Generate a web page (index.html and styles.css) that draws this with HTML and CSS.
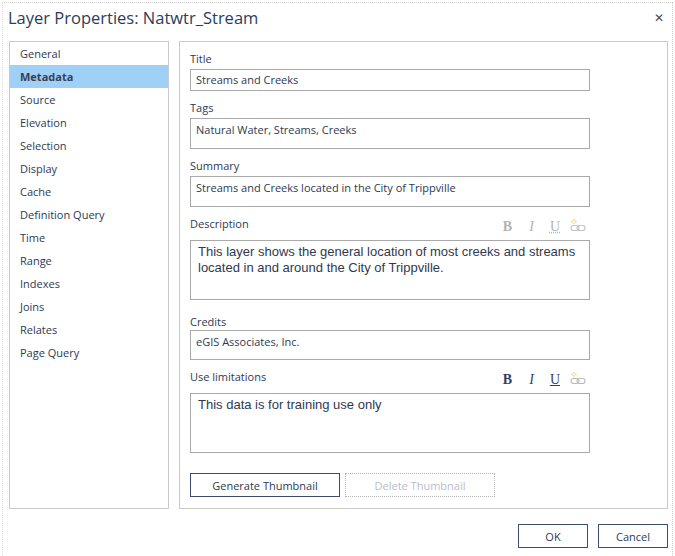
FILE: index.html
```html
<!DOCTYPE html>
<html>
<head>
<meta charset="utf-8">
<link rel="stylesheet" href="styles.css">
</head>
<body>
<div class="frame">
  <div class="titlebar">
    <span class="title">Layer Properties: Natwtr_Stream</span>
    <span class="close">&#x2715;</span>
  </div>
  <div class="main">
    <ul class="nav">
      <li>General</li>
      <li class="selected">Metadata</li>
      <li>Source</li>
      <li>Elevation</li>
      <li>Selection</li>
      <li>Display</li>
      <li>Cache</li>
      <li>Definition Query</li>
      <li>Time</li>
      <li>Range</li>
      <li>Indexes</li>
      <li>Joins</li>
      <li>Relates</li>
      <li>Page Query</li>
    </ul>
    <div class="content">
      <div class="label">Title</div>
      <div class="input single">Streams and Creeks</div>

      <div class="label gap">Tags</div>
      <div class="input double">Natural Water, Streams, Creeks</div>

      <div class="label gap">Summary</div>
      <div class="input double">Streams and Creeks located in the City of Trippville</div>

      <div class="labelrow gap">
        <span class="label">Description</span>
        <span class="tools disabled">
          <span class="tb b">B</span>
          <span class="tb i">I</span>
          <span class="tb u">U</span>
          <svg class="link" width="16" height="14" viewBox="0 0 16 14"><g stroke="#e9dc8a" stroke-width="1" fill="none"><circle cx="4" cy="3.5" r="1.6"/><path d="M4 0.5v1M4 5.5v1M1 3.5h1M6 3.5h1"/></g><g stroke="#c4c4c4" stroke-width="1.2" fill="none"><rect x="1" y="7.5" width="8" height="5" rx="2.5"/><rect x="7" y="7.5" width="8" height="5" rx="2.5"/></g></svg>
        </span>
      </div>
      <div class="input area">This layer shows the general location of most creeks and streams located in and around the City of Trippville.</div>

      <div class="label credits">Credits</div>
      <div class="input credit">eGIS Associates, Inc.</div>

      <div class="labelrow gap">
        <span class="label">Use limitations</span>
        <span class="tools">
          <span class="tb b">B</span>
          <span class="tb i">I</span>
          <span class="tb u">U</span>
          <svg class="link" width="16" height="14" viewBox="0 0 16 14"><g stroke="#f0e08a" stroke-width="1" fill="none"><circle cx="4" cy="3.5" r="1.6"/><path d="M4 0.5v1M4 5.5v1M1 3.5h1M6 3.5h1"/></g><g stroke="#bdbdbd" stroke-width="1.2" fill="none"><rect x="1" y="7.5" width="8" height="5" rx="2.5"/><rect x="7" y="7.5" width="8" height="5" rx="2.5"/></g></svg>
        </span>
      </div>
      <div class="input area">This data is for training use only</div>

      <div class="thumbs">
        <button class="btn">Generate Thumbnail</button>
        <button class="btn off">Delete Thumbnail</button>
      </div>
    </div>
  </div>
  <div class="footer">
    <button class="btn small">OK</button>
    <button class="btn small">Cancel</button>
  </div>
</div>
</body>
</html>
```

FILE: styles.css
```css
html, body {
  margin: 0;
  padding: 0;
  background: #ffffff;
}

body {
  font-family: "Open Sans", "Noto Sans", sans-serif;
  font-size: 11px;
  color: #2e3a52;
}

.frame {
  margin: 2px 2px 0 2px;
  height: 554px;
  box-sizing: border-box;
  border-top: 1px dotted #c8c8c8;
  border-left: 1px dotted #dcdcdc;
  border-right: 1px dotted #c8c8c8;
  display: flex;
  flex-direction: column;
}

.titlebar {
  height: 38px;
  box-sizing: border-box;
  display: flex;
  align-items: flex-start;
  justify-content: space-between;
  padding: 3px 8px 0 5px;
}

.title {
  font-size: 16.5px;
  font-weight: 400;
  color: #2c3d5b;
  line-height: 24px;
}

.close {
  font-family: "DejaVu Sans", sans-serif;
  font-size: 12px;
  line-height: 24px;
  color: #4a4a4a;
}

.main {
  display: flex;
  gap: 10px;
  padding: 0 4px 0 6px;
  height: 468px;
}

.nav {
  list-style: none;
  margin: 0;
  padding: 0;
  width: 160px;
  box-sizing: border-box;
  border: 1px solid #cacaca;
}

.nav li {
  height: 23px;
  box-sizing: border-box;
  padding-top: 1px;
  line-height: 22px;
  padding-left: 10px;
}

.nav li.selected {
  background: #9fd0f5;
  font-weight: 700;
  color: #3a3f55;
}

.content {
  width: 489px;
  box-sizing: border-box;
  border: 1px solid #cacaca;
  padding: 9px 0 0 10px;
}

.label {
  line-height: 16px;
  height: 16px;
  margin-bottom: 2px;
}

.labelrow .label {
  margin-bottom: 0;
}

.gap {
  margin-top: 9px;
}

.credits {
  margin-top: 14px;
  margin-bottom: 0;
}

.labelrow {
  width: 400px;
  height: 22px;
  display: flex;
  justify-content: space-between;
  align-items: flex-start;
  margin-bottom: 2px;
}

.tools {
  display: flex;
  align-items: center;
  padding-right: 4px;
  padding-top: 2px;
  height: 18px;
}

.tb {
  font-family: "Liberation Serif", serif;
  font-size: 14px;
  color: #2f3f66;
  line-height: 14px;
}

.tb.b {
  font-weight: 700;
  margin-right: 17px;
}

.tb.i {
  font-style: italic;
  margin-right: 16px;
}

.tb.u {
  text-decoration: underline;
  margin-right: 10px;
}

.disabled .tb {
  color: #b3b3b3;
}

.disabled .tb.u {
  text-decoration-style: dotted;
}

.link {
  display: block;
  margin-top: -4px;
}

.input {
  width: 400px;
  box-sizing: border-box;
  border: 1px solid #a9a9a9;
  padding: 0 5px;
  background: #fff;
}

.single {
  height: 22px;
  line-height: 20px;
}

.double {
  height: 31px;
  padding-top: 3px;
  line-height: 16px;
}

.credit {
  height: 30px;
  padding-top: 3px;
  line-height: 16px;
}

.area {
  height: 60px;
  padding: 3px 7px;
  font-family: "Liberation Sans", Arial, sans-serif;
  font-size: 13px;
  line-height: 16px;
  color: #2f3a50;
}

.thumbs {
  display: flex;
  gap: 5px;
  margin-top: 20px;
}

.btn {
  font-family: "Open Sans", "Noto Sans", sans-serif;
  font-size: 11px;
  color: #2e3a52;
  background: #fff;
  border: 1px solid #3e4c6c;
  width: 150px;
  height: 24px;
  padding: 0;
  margin: 0;
  box-sizing: border-box;
}

.btn.off {
  border: 1px dotted #b4b4b4;
  color: #b8bec8;
}

.footer {
  display: flex;
  justify-content: flex-end;
  gap: 10px;
  padding: 15px 4px 0 0;
}

.btn.small {
  width: 70px;
}
```
